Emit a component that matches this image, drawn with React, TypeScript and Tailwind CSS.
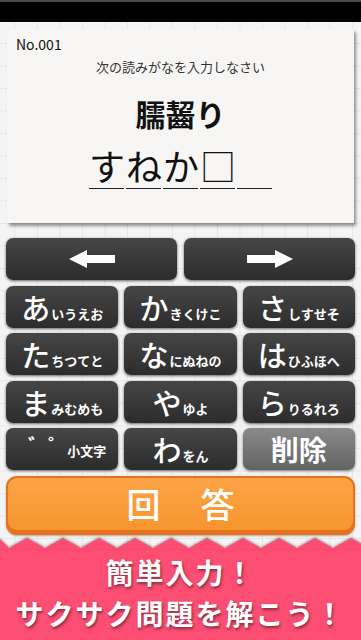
import React from "react";

const font = { fontFamily: '"Noto Sans CJK JP", "Noto Sans", sans-serif' };

function Key({ big, small }: { big: string; small: string }) {
  return (
    <div className="flex-1 h-[42px] rounded-[7px] bg-[linear-gradient(#464646,#2c2c2c)] shadow-[0_1px_3px_rgba(0,0,0,0.6)] flex items-end justify-center pb-[4px] text-white">
      <span className="text-[29px] leading-[34px] font-medium">{big}</span>
      <span className="text-[13px] leading-[20px] font-bold ml-[1px]">{small}</span>
    </div>
  );
}

function Arrow({ dir }: { dir: "l" | "r" }) {
  return (
    <svg width="46" height="18" viewBox="0 0 46 18">
      {dir === "l" ? (
        <polygon points="0,9 18,0 18,5 46,5 46,13 18,13 18,18" fill="#fff" />
      ) : (
        <polygon points="46,9 28,0 28,5 0,5 0,13 28,13 28,18" fill="#fff" />
      )}
    </svg>
  );
}

export default function App() {
  const zig = Array.from({ length: 12 }, (_, i) => i);
  return (
    <div
      style={font}
      className="w-[361px] h-[640px] overflow-hidden flex flex-col bg-[#f4f4f4] [background-image:linear-gradient(#e7e7e7_1px,transparent_1px),linear-gradient(90deg,#e7e7e7_1px,transparent_1px)] [background-size:22.5px_22.5px] [background-position:-8px_-2px]"
    >
      <div className="h-[22px] shrink-0 bg-black border-t-2 border-[#4a4a4a]" />
      <div className="mx-[7px] mt-[7px] h-[194px] bg-[#f7f6f4] shadow-[2px_3px_3px_rgba(0,0,0,0.4)] flex flex-col">
        <div className="pl-[9px] pt-[6px] text-[14px] leading-[18px] text-[#111]">No.001</div>
        <div className="text-center text-[13px] leading-[18px] text-[#333] mt-[5px]">次の読みがなを入力しなさい</div>
        <div className="text-center text-[30px] leading-[36px] font-bold text-[#111] mt-[19px]">臑齧り</div>
        <div className="flex justify-center mt-[14px]">
          {["す", "ね", "か", "□", ""].map((c, i) => (
            <div key={i} className="w-[35px] mx-[1px] h-[44px] border-b-[1.5px] border-[#222] text-[36px] leading-[40px] text-center text-[#111]">
              {c}
            </div>
          ))}
        </div>
      </div>

      <div className="mt-[15px] px-[6px] flex flex-col gap-[5.5px]">
        <div className="flex gap-[7px]">
          <div className="flex-1 h-[42px] rounded-[7px] bg-[linear-gradient(#464646,#2c2c2c)] shadow-[0_1px_3px_rgba(0,0,0,0.6)] flex items-center justify-center">
            <Arrow dir="l" />
          </div>
          <div className="flex-1 h-[42px] rounded-[7px] bg-[linear-gradient(#464646,#2c2c2c)] shadow-[0_1px_3px_rgba(0,0,0,0.6)] flex items-center justify-center">
            <Arrow dir="r" />
          </div>
        </div>
        <div className="flex gap-[6px]">
          <Key big="あ" small="いうえお" />
          <Key big="か" small="きくけこ" />
          <Key big="さ" small="しすせそ" />
        </div>
        <div className="flex gap-[6px]">
          <Key big="た" small="ちつてと" />
          <Key big="な" small="にぬねの" />
          <Key big="は" small="ひふほへ" />
        </div>
        <div className="flex gap-[6px]">
          <Key big="ま" small="みむめも" />
          <Key big="や" small="ゆよ" />
          <Key big="ら" small="りるれろ" />
        </div>
        <div className="flex gap-[6px]">
          <div className="flex-1 min-w-0 h-[42px] rounded-[7px] bg-[linear-gradient(#464646,#2c2c2c)] shadow-[0_1px_3px_rgba(0,0,0,0.6)] text-white">
            <div className="w-full h-full flex items-start pt-[8px] pl-[22px] pr-[12px]">
              <span className="w-[20px] shrink-0 text-[20px] leading-[20px] font-bold">゛</span>
              <span className="w-[16px] shrink-0 text-[20px] leading-[20px] font-bold">゜</span>
              <span className="ml-auto shrink-0 whitespace-nowrap text-[13px] leading-[16px] font-bold mt-[7px]">小文字</span>
            </div>
          </div>
          <Key big="わ" small="をん" />
          <div className="flex-1 h-[42px] rounded-[7px] bg-[linear-gradient(#8a8a8a,#636363)] shadow-[0_1px_3px_rgba(0,0,0,0.5)] flex items-center justify-center text-white">
            <span className="text-[28px] leading-[34px] font-bold">削除</span>
          </div>
        </div>
      </div>

      <div className="mx-[6px] mt-[6px] h-[59px] rounded-[11px] bg-[#e8721c] p-[2px] pb-[5px] shadow-[0_1px_2px_rgba(0,0,0,0.3)]">
        <div className="h-full rounded-[9px] bg-[linear-gradient(#fba446,#f7952f)] flex items-center justify-center gap-[40px] text-white">
          <span className="text-[34px] leading-[40px] font-medium">回</span>
          <span className="text-[34px] leading-[40px] font-medium">答</span>
        </div>
      </div>

      <div className="relative mt-[2px] flex-1 flex flex-col">
        <svg width="361" height="12" viewBox="0 0 361 12" className="block [filter:drop-shadow(0_-1px_1px_rgba(0,0,0,0.35))]">
          <polygon
            fill="#fb4e72"
            points={
              "0,12 0,2 " +
              zig.map((i) => `${9 + i * 36},11 ${27 + i * 36},1`).join(" ") +
              " 361,12"
            }
          />
        </svg>
        <div className="flex-1 bg-[#fb4e72] flex flex-col items-center text-white font-bold text-[28px] leading-[41px] tracking-[2px] pt-[3px] [text-shadow:1px_2px_3px_rgba(0,0,0,0.45)]">
          <div>簡単入力！</div>
          <div>サクサク問題を解こう！</div>
        </div>
      </div>
    </div>
  );
}
